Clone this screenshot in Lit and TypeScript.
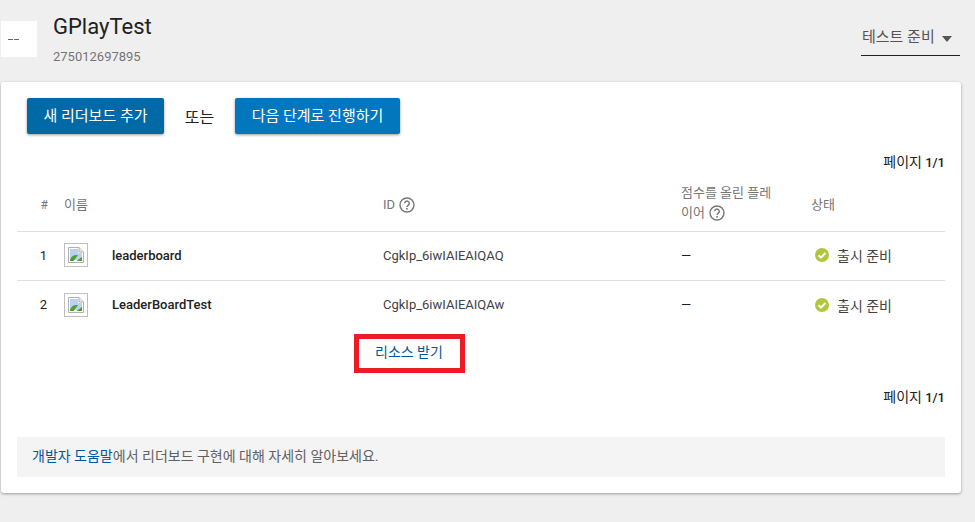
import { LitElement, html, css, svg } from "lit";
import { customElement } from "lit/decorators.js";

const help = svg`<svg class="help" width="16" height="16" viewBox="0 0 16 16"><circle cx="8" cy="8" r="7" fill="none" stroke="#757575" stroke-width="1.4"/><path d="M5.700 6.300a2.300 2.300 0 1 1 3.600 1.900c-.8.5-1.300 1-1.300 1.900" fill="none" stroke="#757575" stroke-width="1.400"/><rect x="7.200" y="11" width="1.600" height="1.600" fill="#757575"/></svg>`;

const check = svg`<svg class="check" width="14" height="14" viewBox="0 0 14 14"><circle cx="7" cy="7" r="7" fill="#afc73a"/><path d="M3.500 7.200l2.500 2.300 4.500-4.500" fill="none" stroke="#fff" stroke-width="2"/></svg>`;

const broken = svg`<svg width="16" height="16" viewBox="0 0 16 16"><path d="M.5.500h10.500l4.500 4.500v10.500H.5z" fill="#fff" stroke="#b0b0b0"/><path d="M11 .500V5h4.500" fill="#e8e8e8" stroke="#b0b0b0"/><path d="M2 2h8v4h4v3L9.500 13H2z" fill="#bcd0f2"/><path d="M2 14v-1.500c2-3.500 4.500-5 8-4.200L5.500 14z" fill="#4f9e34"/><path d="M8.500 14l5.500-4.500V14z" fill="#4f9e34"/></svg>`;

const rows = [
  { n: "1", name: "leaderboard", id: "CgkIp_6iwIAIEAIQAQ" },
  { n: "2", name: "LeaderBoardTest", id: "CgkIp_6iwIAIEAIQAw" },
];

@customElement("app-root")
export class AppRoot extends LitElement {
  static styles = css`
    :host {
      display: block;
      width: 975px;
      height: 522px;
      overflow: hidden;
      background: #efefef;
      font-family: Roboto, "Noto Sans CJK KR", sans-serif;
      font-size: 13px;
      color: #212121;
    }
    .top {
      height: 82px;
      box-sizing: border-box;
      display: flex;
      padding: 21px 15px 0 1px;
    }
    .logo {
      width: 36px;
      height: 36px;
      background: #fff;
      display: flex;
      align-items: center;
      padding-left: 7px;
      box-sizing: border-box;
      gap: 1px;
      margin-right: 16px;
    }
    .logo i {
      width: 5px;
      height: 1px;
      background: #666;
    }
    .app {
      flex: 1;
      margin-top: -9px;
    }
    .title {
      font-size: 22px;
      line-height: 30px;
    }
    .sub {
      margin-top: 6px;
      line-height: 18px;
      color: #757575;
    }
    .select {
      width: 99px;
      height: 35px;
      box-sizing: border-box;
      border-bottom: 1px solid #212121;
      display: flex;
      align-items: flex-start;
      justify-content: space-between;
      padding: 6px 8px 0 1px;
      font-size: 15px;
      line-height: 20px;
      color: #555;
    }
    .caret {
      width: 0;
      height: 0;
      margin-top: 9px;
      border-left: 5.500px solid transparent;
      border-right: 5.500px solid transparent;
      border-top: 6px solid #555;
    }
    .card {
      margin-left: 1px;
      width: 960px;
      height: 411px;
      box-sizing: border-box;
      background: #fff;
      border-radius: 3px;
      box-shadow: 0 1px 3px rgba(0, 0, 0, 0.35);
      padding: 16px 16px 0;
      display: flex;
      flex-direction: column;
    }
    .actions {
      display: flex;
      align-items: center;
      padding-left: 10px;
      height: 36px;
    }
    .btn {
      height: 36px;
      border-radius: 2px;
      color: #fff;
      font-size: 15px;
      padding-bottom: 3px;
      box-sizing: border-box;
      display: flex;
      align-items: center;
      justify-content: center;
      box-shadow: 0 1px 3px rgba(0, 0, 0, 0.4);
    }
    .b1 {
      width: 137px;
      background: #0069a6;
    }
    .b2 {
      width: 165px;
      background: #0277bd;
    }
    .or {
      width: 71px;
      text-align: center;
      font-size: 16px;
      color: #212121;
    }
    .pager {
      text-align: right;
      line-height: 18px;
      height: 18px;
    }
    .pager span {
      font-size: 14px;
    }
    .pager b {
      font-weight: 500;
    }
    .p1 {
      margin-top: 19px;
    }
    .row {
      display: grid;
      grid-template-columns: 47px 319px 298px 130px 134px;
      align-items: center;
    }
    .head {
      height: 61px;
      box-sizing: border-box;
      color: #757575;
      line-height: 20px;
      padding-top: 8px;
      border-bottom: 1px solid #e0e0e0;
    }
    .body {
      height: 49px;
      box-sizing: border-box;
      padding-bottom: 2px;
    }
    .sep {
      border-bottom: 1px solid #e0e0e0;
    }
    .num {
      text-align: right;
      padding-right: 17px;
    }
    .head .num {
      padding-right: 16px;
      font-size: 12px;
    }
    .id {
      color: #424242;
    }
    .help {
      vertical-align: -4px;
      margin-left: 1px;
    }
    .players {
      width: 100px;
      padding-bottom: 4px;
    }
    .namecell {
      display: flex;
      align-items: center;
      font-weight: 500;
    }
    .thumb {
      width: 24px;
      height: 24px;
      box-sizing: border-box;
      border: 1px solid #c0c0c0;
      display: flex;
      align-items: center;
      justify-content: center;
      margin-right: 24px;
    }
    .status {
      display: flex;
      align-items: center;
      gap: 8px;
      padding-left: 4px;
      color: #424242;
      font-size: 14px;
    }
    .resbox {
      width: 111px;
      height: 39px;
      box-sizing: border-box;
      border: 5px solid #ed1c24;
      margin: 4px 0 0 337px;
      display: flex;
      align-items: center;
      color: #01579b;
      font-size: 14px;
      padding: 0 0 5px 16px;
    }
    .p2 {
      margin-top: 15px;
    }
    .note {
      margin-top: 31px;
      height: 40px;
      box-sizing: border-box;
      background: #f4f4f4;
      display: flex;
      align-items: center;
      padding: 0 15px 4px;
      color: #616161;
      font-size: 14px;
    }
    .note a {
      color: #01579b;
    }
  `;

  render() {
    return html`
      <div class="top">
        <div class="logo"><i></i><i></i></div>
        <div class="app">
          <div class="title">GPlayTest</div>
          <div class="sub">275012697895</div>
        </div>
        <div class="select"><span>테스트 준비</span><span class="caret"></span></div>
      </div>
      <div class="card">
        <div class="actions">
          <div class="btn b1">새 리더보드 추가</div>
          <div class="or">또는</div>
          <div class="btn b2">다음 단계로 진행하기</div>
        </div>
        <div class="pager p1"><span>페이지</span> <b>1/1</b></div>
        <div class="row head">
          <div class="num">#</div>
          <div>이름</div>
          <div>ID ${help}</div>
          <div class="players">점수를 올린 플레이어 ${help}</div>
          <div>상태</div>
        </div>
        ${rows.map(
          (r, i) => html`
            <div class="row body ${i === 0 ? "sep" : ""}">
              <div class="num">${r.n}</div>
              <div class="namecell"><span class="thumb">${broken}</span>${r.name}</div>
              <div class="id">${r.id}</div>
              <div>—</div>
              <div class="status">${check}<span>출시 준비</span></div>
            </div>
          `
        )}
        <div class="resbox">리소스 받기</div>
        <div class="pager p2"><span>페이지</span> <b>1/1</b></div>
        <div class="note"><span><a>개발자 도움말</a>에서 리더보드 구현에 대해 자세히 알아보세요.</span></div>
      </div>
    `;
  }
}
